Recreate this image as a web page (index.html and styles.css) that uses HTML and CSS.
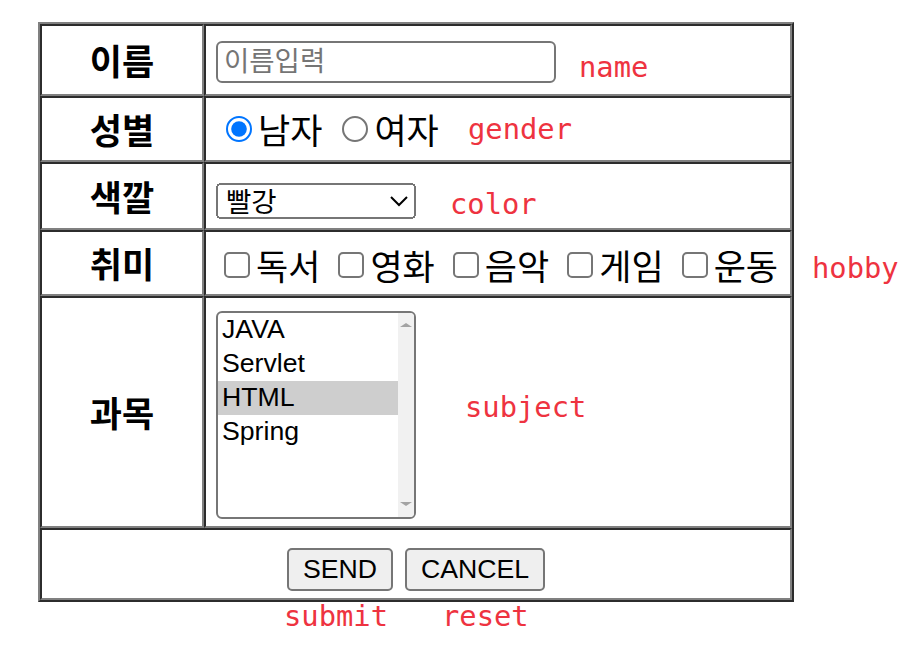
FILE: index.html
```html
<!DOCTYPE html>
<html lang="ko">
<head>
<meta charset="utf-8">
<title>회원 정보 입력</title>
<link rel="stylesheet" href="styles.css">
</head>
<body>
<div class="sheet">
  <form class="form">
    <table class="grid">
      <tr class="r1">
        <th>이름</th>
        <td><div class="cell nudge-1"><input class="name-input" type="text" placeholder="이름입력"></div></td>
      </tr>
      <tr class="r2">
        <th>성별</th>
        <td>
          <div class="cell choices">
            <label class="choice"><input class="radio" type="radio" name="gender" checked>남자</label>
            <label class="choice"><input class="radio" type="radio" name="gender">여자</label>
          </div>
        </td>
      </tr>
      <tr class="r3">
        <th>색깔</th>
        <td>
          <div class="cell nudge-select">
            <select class="color-select">
              <option>빨강</option>
              <option>파랑</option>
              <option>초록</option>
            </select>
          </div>
        </td>
      </tr>
      <tr class="r4">
        <th>취미</th>
        <td>
          <div class="cell choices nudge-1">
            <label class="choice"><input class="check" type="checkbox">독서</label>
            <label class="choice"><input class="check" type="checkbox">영화</label>
            <label class="choice"><input class="check" type="checkbox">음악</label>
            <label class="choice"><input class="check" type="checkbox">게임</label>
            <label class="choice"><input class="check" type="checkbox">운동</label>
          </div>
        </td>
      </tr>
      <tr class="r5">
        <th>과목</th>
        <td>
          <div class="listbox">
            <div class="list-options">
              <div class="list-option">JAVA</div>
              <div class="list-option">Servlet</div>
              <div class="list-option is-selected">HTML</div>
              <div class="list-option">Spring</div>
            </div>
            <div class="list-scroll">
              <span class="arrow-up"></span>
              <span class="arrow-down"></span>
            </div>
          </div>
        </td>
      </tr>
      <tr class="r6">
        <td colspan="2">
          <div class="actions">
            <input class="btn" type="submit" value="SEND">
            <input class="btn" type="reset" value="CANCEL">
          </div>
        </td>
      </tr>
    </table>
  </form>

  <span class="note note-name">name</span>
  <span class="note note-gender">gender</span>
  <span class="note note-color">color</span>
  <span class="note note-hobby">hobby</span>
  <span class="note note-subject">subject</span>
  <span class="note note-submit">submit</span>
  <span class="note note-reset">reset</span>
</div>
</body>
</html>
```

FILE: styles.css
```css
html, body {
  margin: 0;
  background: #fff;
}

body {
  font-family: "Noto Sans CJK KR", "Noto Sans", sans-serif;
  color: #000;
}

.sheet {
  zoom: 2;
  position: relative;
  box-sizing: border-box;
  min-height: 326px;
  padding: 11px 0 0 19px;
}

.form {
  margin: 0;
}

.grid {
  border: 1px outset gray;
  border-spacing: 0;
  width: 378px;
  table-layout: fixed;
  font-size: 17.5px;
  line-height: 20px;
}

.grid th,
.grid td {
  border: 1px inset gray;
  padding: 5px;
  vertical-align: middle;
}

.grid th {
  width: 70px;
  font-weight: bold;
  text-align: center;
}

.r1 { height: 36px; }
.r2 { height: 33px; }
.r3 { height: 34px; }
.r4 { height: 33px; }
.r5 { height: 116px; }
.r6 { height: 36px; }

.cell {
  display: flex;
  align-items: center;
}

.nudge-1 {
  margin: 1px 0 -1px;
}

.nudge-select {
  margin: 2.5px 0 -2.5px;
}

.name-input {
  box-sizing: border-box;
  width: 170px;
  height: 21px;
  margin: 0;
  padding: 1px 2px 1px 3px;
  border: 1px solid #767676;
  border-radius: 3px;
  font: 13.75px "Liberation Sans", "Noto Sans CJK KR", sans-serif;
}

.name-input::placeholder {
  color: #757575;
}

.choices {
  gap: 5px;
}

.choice {
  display: inline-flex;
  align-items: center;
  white-space: nowrap;
  line-height: 20px;
}

.radio {
  width: 13px;
  height: 13px;
  margin: 0 3px 0 5px;
}

.check {
  width: 13px;
  height: 13px;
  margin: 0 3px 0 4px;
}

.color-select {
  width: 100px;
  height: 18px;
  margin: 0;
  font: 13.75px "Liberation Sans", "Noto Sans CJK KR", sans-serif;
  color: #000;
}

.listbox {
  display: flex;
  box-sizing: border-box;
  width: 100px;
  height: 104px;
  margin: 1.5px 0 -1.5px;
  border: 1px solid #767676;
  border-radius: 3px;
  overflow: hidden;
  background: #fff;
}

.list-options {
  flex: 1;
  font: 13.33px "Liberation Sans", sans-serif;
  line-height: 16px;
}

.list-option {
  height: 17px;
  padding: 0 2px 1px 2px;
  box-sizing: border-box;
  white-space: nowrap;
}

.list-option.is-selected {
  background: #cecece;
}

.list-scroll {
  width: 8px;
  background: #f1f1f1;
  display: flex;
  flex-direction: column;
  align-items: center;
  justify-content: space-between;
  padding: 5px 0 5.5px;
}

.arrow-up,
.arrow-down {
  width: 0;
  height: 0;
  border-left: 3px solid transparent;
  border-right: 3px solid transparent;
}

.arrow-up {
  border-bottom: 2px solid #a3a3a3;
}

.arrow-down {
  border-top: 2px solid #a3a3a3;
}

.actions {
  display: flex;
  justify-content: center;
  gap: 6px;
  margin: 2.75px 0 -2.75px;
}

.btn {
  margin: 0;
  font: 13.33px "Liberation Sans", sans-serif;
  color: #000;
}

.note {
  position: absolute;
  font: 14.4px/14px "DejaVu Sans Mono", monospace;
  color: #ee3340;
  white-space: nowrap;
}

.note-name { left: 289.5px; top: 26.6px; }
.note-gender { left: 234px; top: 57.6px; }
.note-color { left: 225px; top: 95px; }
.note-hobby { left: 406px; top: 127px; }
.note-subject { left: 232.5px; top: 196.6px; }
.note-submit { left: 142px; top: 301px; }
.note-reset { left: 221px; top: 301px; }
```
